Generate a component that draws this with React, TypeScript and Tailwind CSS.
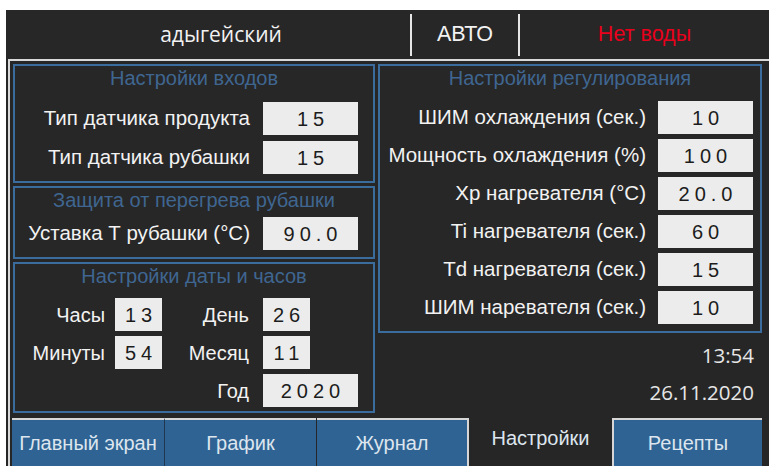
const SANS = "font-['Liberation_Sans',Arial,sans-serif]";

function Field({ value, wide = true }: { value: string; wide?: boolean }) {
  return (
    <div
      className={`${wide ? 'w-[95px]' : 'w-[47px]'} h-[33px] shrink-0 bg-[#ececec] text-[#1c1c1c] flex items-center justify-center text-[20px] tracking-[5px] pl-[5px]`}
    >
      {value}
    </div>
  );
}

function Box({ title, className, children }: { title: string; className: string; children: React.ReactNode }) {
  return (
    <div className={`border-2 border-[#3a6c9e] bg-[#272727] flex flex-col ${className}`}>
      <div className="h-[24px] flex items-center justify-center text-[20px] text-[#3f6691] whitespace-nowrap">{title}</div>
      {children}
    </div>
  );
}

function Row({ label, value }: { label: string; value: string }) {
  return (
    <div className="flex items-center justify-end gap-[13px]">
      <span className="text-[20.5px] text-[#f2f2f2] whitespace-nowrap">{label}</span>
      <Field value={value} />
    </div>
  );
}

const REG = [
  ['ШИМ охлаждения (сек.)', '10'],
  ['Мощность охлаждения (%)', '100'],
  ['Xp нагревателя (°C)', '20.0'],
  ['Ti нагревателя (сек.)', '60'],
  ['Td нагревателя (сек.)', '15'],
  ['ШИМ наревателя (сек.)', '10'],
];

const TABS = [
  { label: 'Главный экран', cls: 'w-[153px] bg-[#2f6393] border-t-2 border-[#d6d6d6] border-r border-r-[#1f3650]' },
  { label: 'График', cls: 'w-[151px] bg-[#2f6393] border-t-2 border-[#d6d6d6]' },
  { label: 'Журнал', cls: 'w-[152px] bg-[#2f6393] border-t-2 border-r-2 border-[#d6d6d6] ml-[1px]' },
  { label: 'Настройки', cls: 'w-[143px] bg-[#262626] pb-[8px]' },
  { label: 'Рецепты', cls: 'w-[150px] bg-[#2f6393] border-t-2 border-l-2 border-[#d6d6d6]' },
];

export default function App() {
  return (
    <div className={`w-[769px] h-[466px] bg-white pl-[6px] pt-[10px] overflow-hidden ${SANS}`}>
      <div className="w-[763px] h-[456px] bg-[#262626] flex flex-col">
        {/* status bar */}
        <div className="h-[49px] shrink-0 flex items-center bg-[#272727]">
          <div className="w-[404px] pl-[26px] flex justify-center text-[21px] text-[#f2f2f2] font-['Open_Sans',sans-serif]">
            адыгейский
          </div>
          <div className="w-[2px] h-[42px] bg-[#e6e6e6]" />
          <div className="w-[106px] flex justify-center text-[21.5px] text-[#f2f2f2]">АВТО</div>
          <div className="w-[2px] h-[42px] bg-[#e6e6e6]" />
          <div className="flex-1 flex justify-center text-[21.5px] text-[#e8001c]">Нет воды</div>
        </div>

        <div className="ml-[2px] flex-1 border-l-2 border-t-2 border-[#d9d9d9] flex flex-col">
          <div className="h-[357px] shrink-0 flex gap-[3px] px-[3px] pt-[3px]">
            {/* left column */}
            <div className="w-[362px] flex flex-col gap-[3px]">
              <Box title="Настройки входов" className="h-[119px]">
                <div className="mt-[12px] pr-[15px] flex flex-col gap-[6px]">
                  <Row label="Тип датчика продукта" value="15" />
                  <Row label="Тип датчика рубашки" value="15" />
                </div>
              </Box>
              <Box title="Защита от перегрева рубашки" className="h-[73px]">
                <div className="mt-[5px] pr-[15px]">
                  <Row label="Уставка Т рубашки (°C)" value="90.0" />
                </div>
              </Box>
              <Box title="Настройки даты и часов" className="h-[151px]">
                <div className="mt-[10px] flex flex-col gap-[5px] text-[20px] text-[#f2f2f2]">
                  <div className="flex items-center">
                    <span className="w-[90px] text-right">Часы</span>
                    <div className="ml-[10px]"><Field value="13" wide={false} /></div>
                    <span className="w-[87px] text-right">День</span>
                    <div className="ml-[14px]"><Field value="26" wide={false} /></div>
                  </div>
                  <div className="flex items-center">
                    <span className="w-[90px] text-right">Минуты</span>
                    <div className="ml-[10px]"><Field value="54" wide={false} /></div>
                    <span className="w-[87px] text-right">Месяц</span>
                    <div className="ml-[14px]"><Field value="11" wide={false} /></div>
                  </div>
                  <div className="flex items-center">
                    <span className="w-[234px] text-right">Год</span>
                    <div className="ml-[14px]"><Field value="2020" /></div>
                  </div>
                </div>
              </Box>
            </div>

            {/* right column */}
            <div className="w-[384px] flex flex-col">
              <Box title="Настройки регулирования" className="h-[269px]">
                <div className="mt-[11px] pr-[7px] flex flex-col gap-[5px]">
                  {REG.map(([l, v]) => (
                    <div key={l} className="flex items-center justify-end gap-[12px]">
                      <span className="text-[20.5px] text-[#f2f2f2] whitespace-nowrap">{l}</span>
                      <Field value={v} />
                    </div>
                  ))}
                </div>
              </Box>
              <div className="flex flex-col items-end pr-[8px] mt-[11px] gap-[15px] text-[20.5px] leading-[22px] text-[#e6e6e6] font-['Open_Sans',sans-serif]">
                <span>13:54</span>
                <span>26.11.2020</span>
              </div>
            </div>
          </div>

          {/* screen tabs */}
          <div className="flex-1 flex pl-[2px]">
            {TABS.map((t) => (
              <div key={t.label} className={`${t.cls} h-full flex items-center justify-center text-[20px] text-[#dde5ee]`}>
                {t.label}
              </div>
            ))}
          </div>
        </div>
      </div>
    </div>
  );
}
